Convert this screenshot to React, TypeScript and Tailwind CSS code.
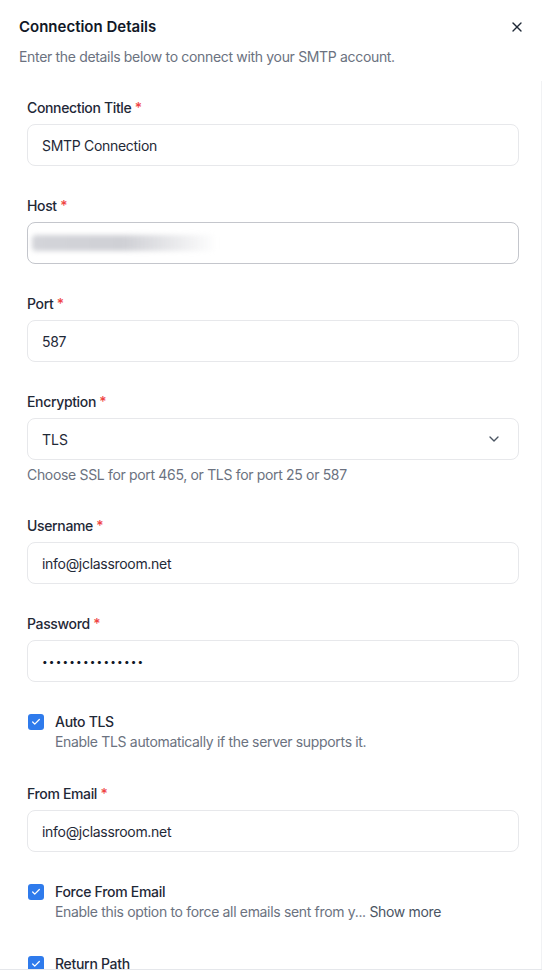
import React from "react";
import { X, ChevronDown, Check } from "lucide-react";

function Label({ text }: { text: string }) {
  return (
    <label className="block text-[14px] leading-5 font-medium tracking-[-0.35px] text-[#1f2937]">
      {text} <span className="text-[#ef4444]">*</span>
    </label>
  );
}

function Field({ label, value, focused }: { label: string; value: React.ReactNode; focused?: boolean }) {
  return (
    <div>
      <Label text={label} />
      <div
        className={`mt-[6px] h-[42px] rounded-lg border bg-white flex items-center px-[14px] text-[14px] tracking-[-0.3px] text-[#1f2937] ${
          focused ? "border-[#c4c6cc]" : "border-[#e7e8eb]"
        }`}
      >
        {value}
      </div>
    </div>
  );
}

function CheckRow({ title, desc }: { title: string; desc?: React.ReactNode }) {
  return (
    <div className="flex gap-[11px] pl-[1px] pb-[2px]">
      <span className="mt-[2px] w-4 h-4 rounded-[3px] bg-[#2f7bec] flex items-center justify-center shrink-0">
        <Check className="w-[10px] h-[10px] text-white" strokeWidth={3} />
      </span>
      <div>
        <div className="text-[14px] leading-5 font-medium tracking-[-0.3px] text-[#1f2937]">{title}</div>
        {desc && <div className="text-[14px] leading-5 tracking-[-0.33px] text-[#6b7280]">{desc}</div>}
      </div>
    </div>
  );
}

export default function App() {
  return (
    <div
      className="h-[978px] w-[542px] bg-white flex flex-col overflow-hidden"
      style={{ fontFamily: "Inter, 'Noto Sans', sans-serif" }}
    >
      {/* Header */}
      <div className="px-[19px] pt-[16px] pb-[14px]">
        <div className="flex items-center justify-between">
          <h2 className="text-[15px] leading-[22px] font-semibold text-[#111827]">Connection Details</h2>
          <button className="text-[#1f2937] mr-[-2px]">
            <X className="w-4 h-4" strokeWidth={2} />
          </button>
        </div>
        <p className="mt-[9px] text-[14px] leading-5 tracking-[-0.33px] text-[#6b7280]">
          Enter the details below to connect with your SMTP account.
        </p>
      </div>

      {/* Scrollable form */}
      <div className="flex-1 overflow-hidden border-r border-[#f1f2f4]">
        <div className="pl-[27px] pr-[22px] pt-[17px] flex flex-col gap-[30px]">
          <Field label="Connection Title" value="SMTP Connection" />
          <Field
            label="Host"
            focused
            value={<div className="ml-[-10px] h-[16px] w-[185px] rounded bg-gradient-to-r from-[#d3d4d9] via-[#cfd0d5] to-transparent blur-[2.5px]" />}
          />
          <Field label="Port" value="587" />
          <div className="pb-[1px]">
            <Label text="Encryption" />
            <div className="mt-[6px] h-[42px] rounded-lg border border-[#e7e8eb] bg-white flex items-center justify-between pl-[14px] pr-[16px] text-[14px] text-[#1f2937]">
              <span>TLS</span>
              <ChevronDown className="w-4 h-4 text-[#4b5563]" strokeWidth={2} />
            </div>
            <p className="mt-[5px] text-[14px] leading-5 tracking-[-0.33px] text-[#6b7280]">
              Choose SSL for port 465, or TLS for port 25 or 587
            </p>
          </div>
          <Field label="Username" value="info@jclassroom.net" />
          <Field
            label="Password"
            value={<span className="tracking-[1.2px] text-[10px] text-[#111827]">•••••••••••••••</span>}
          />
          <CheckRow title="Auto TLS" desc="Enable TLS automatically if the server supports it." />
          <Field label="From Email" value="info@jclassroom.net" />
          <CheckRow
            title="Force From Email"
            desc={
              <>
                Enable this option to force all emails sent from y...{" "}
                <span className="text-[#4b5563]">Show more</span>
              </>
            }
          />
          <CheckRow title="Return Path" />
        </div>
      </div>

      {/* Footer edge */}
      <div className="h-[9px] border-t border-[#e5e7eb] shrink-0" />
    </div>
  );
}
